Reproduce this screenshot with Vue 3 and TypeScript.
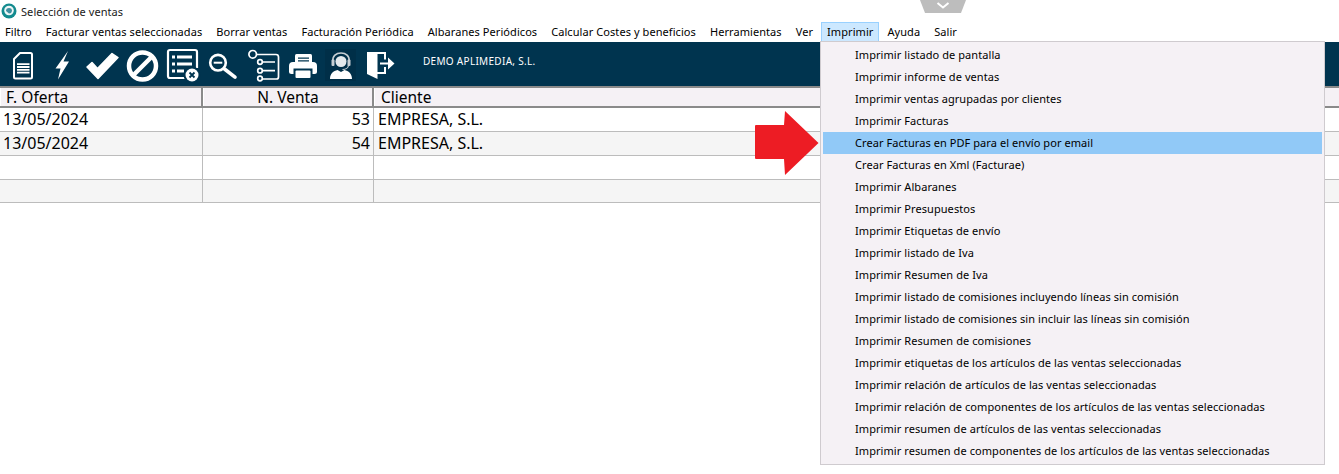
<script setup lang="ts">
const menus = ['Filtro','Facturar ventas seleccionadas','Borrar ventas','Facturación Periódica','Albaranes Periódicos','Calcular Costes y beneficios','Herramientas','Ver','Imprimir','Ayuda','Salir']
const items = [
  'Imprimir listado de pantalla','Imprimir informe de ventas','Imprimir ventas agrupadas por clientes','Imprimir Facturas',
  'Crear Facturas en PDF para el envío por email','Crear Facturas en Xml (Facturae)','Imprimir Albaranes','Imprimir Presupuestos',
  'Imprimir Etiquetas de envío','Imprimir listado de Iva','Imprimir Resumen de Iva','Imprimir listado de comisiones incluyendo líneas sin comisión',
  'Imprimir listado de comisiones sin incluir las líneas sin comisión','Imprimir Resumen de comisiones','Imprimir etiquetas de los artículos de las ventas seleccionadas',
  'Imprimir relación de artículos de las ventas seleccionadas','Imprimir relación de componentes de los artículos de las ventas seleccionadas',
  'Imprimir resumen de artículos de las ventas seleccionadas','Imprimir resumen de componentes de los artículos de las ventas seleccionadas'
]
const rows = [
  { date: '13/05/2024', num: '53', client: 'EMPRESA, S.L.' },
  { date: '13/05/2024', num: '54', client: 'EMPRESA, S.L.' },
  { date: '', num: '', client: '' },
  { date: '', num: '', client: '' }
]
</script>

<template>
  <div class="window">
    <div class="titlebar">
      <svg class="logo" width="16" height="16" viewBox="0 0 16 16">
        <circle cx="8" cy="8" r="7.5" fill="#138b8f" />
        <circle cx="8" cy="7.500" r="4.800" fill="#eef6f6" />
        <path d="M5 8a3 3 0 0 1 6 0 3 3 0 0 1-3 2.500z" fill="#3f8fa0" />
      </svg>
      <span>Selección de ventas</span>
    </div>
    <nav class="menubar">
      <span v-for="m in menus" :key="m" class="menu" :class="{ active: m === 'Imprimir' }">{{ m }}</span>
    </nav>
    <div class="toolbar">
      <!-- document -->
      <svg class="ico" viewBox="0 0 40 40" fill="none" stroke="#fff" stroke-width="2">
        <path d="M18 9h10.500q1.500 0 1.500 1.500v22.500q0 1.500-1.500 1.500h-15q-1.500 0-1.500-1.500V15z" stroke-linejoin="round" />
        <path d="M15 20.200h12.500M15 23h12.500M15 25.800h12.500M15 28.600h12.500" stroke-width="1.800" />
      </svg>
      <!-- bolt -->
      <svg class="ico" viewBox="0 0 40 40">
        <path d="M26 7 13.500 24.500H18.500L16 35.500 27 17.500H21.500z" fill="#fff" />
      </svg>
      <!-- check -->
      <svg class="ico" viewBox="0 0 40 40">
        <path d="M5 23l5-4.500 5.500 6L30 9.500l6 4-20 21z" fill="#fff" stroke="#fff" stroke-linejoin="round" stroke-width="1.500" />
      </svg>
      <!-- forbidden -->
      <svg class="ico" viewBox="0 0 40 40" fill="none" stroke="#fff" stroke-width="4.500">
        <circle cx="20.500" cy="22" r="13.500" />
        <path d="M11 31.500l19-19" />
      </svg>
      <!-- list with x -->
      <svg class="ico" viewBox="0 0 40 40" fill="none" stroke="#fff">
        <path d="M26 34H8q-2 0-2-2V8q0-2 2-2h25q2 0 2 2v16" stroke-width="2.200" />
        <path d="M10 13h3M15 13h15M10 20h3M15 20h15M10 27h3M15 27h7" stroke-width="3" />
        <circle cx="30" cy="31" r="8.500" fill="#00344f" stroke="none" />
        <circle cx="30" cy="31" r="6.500" fill="#fff" stroke="none" />
        <path d="M27.500 28.500l5 5M32.500 28.500l-5 5" stroke="#00344f" stroke-width="1.800" />
      </svg>
      <!-- magnifier -->
      <svg class="ico" viewBox="0 0 40 40" fill="none" stroke="#fff">
        <circle cx="16" cy="18.700" r="7.800" stroke-width="2.600" />
        <path d="M11.700 18.700h8.600" stroke-width="2" />
        <path d="M22.500 25 33 33.200" stroke-width="3.600" stroke-linecap="round" />
      </svg>
      <!-- tree -->
      <svg class="ico" viewBox="0 0 40 40" fill="none" stroke="#fff" stroke-width="1.700">
        <circle cx="10.700" cy="10.300" r="3.800" />
        <path d="M14.500 10.500H34q2.500 0 2.500 2.500v20q0 2-2 2H20.500" />
        <circle cx="18" cy="18" r="2.300" /><circle cx="18" cy="26.700" r="2.300" /><circle cx="18" cy="34.500" r="2.300" />
        <path d="M20.500 18H33M20.500 26.700H33" />
      </svg>
      <!-- printer -->
      <svg class="ico" viewBox="0 0 40 40">
        <path d="M13 20V11.500q0-1.500 1.500-1.500h14q1.500 0 1.500 1.500V20z" fill="#fff" />
        <path d="M16 14.200h11M16 16.800h11" stroke="#00344f" stroke-width="1.200" />
        <path d="M11 18h20q4 0 4 4v5.500q0 2.500-2.500 2.500h-23Q7 30 7 27.500V22q0-4 4-4z" fill="#fff" />
        <rect x="11.500" y="24.500" width="19" height="9.500" fill="#00344f" />
        <rect x="13.500" y="26.500" width="15" height="7.500" rx="1" fill="#fff" />
      </svg>
      <!-- person with headset -->
      <svg class="ico" viewBox="0 0 40 40">
        <rect x="3" y="5" width="31" height="32" fill="#002f48" />
        <circle cx="19" cy="17.500" r="5.500" fill="#e4e9ec" />
        <path d="M11 18c-1-6.500 3.500-9 8-9s9 2.500 8 9" fill="none" stroke="#c6ced3" stroke-width="1.700" />
        <path d="M26.500 21c0 3-3 4.500-6 4.500" fill="none" stroke="#c6ced3" stroke-width="1.200" />
        <rect x="9.500" y="15.500" width="3" height="6.500" rx="1" fill="#c6ced3" />
        <rect x="25.500" y="15.500" width="3" height="6.500" rx="1" fill="#c6ced3" />
        <path d="M8 35c0-5.500 3.500-8 7.500-9l3.500 2 3.500-2c4 1 7.500 3.500 7.500 9z" fill="#fff" />
      </svg>
      <!-- exit door -->
      <svg class="ico" viewBox="0 0 40 40">
        <path d="M5 8h10.500v27L5 30z" fill="#fff" />
        <path d="M15 9h8v6.500M23 23v6H15" fill="none" stroke="#fff" stroke-width="2" />
        <path d="M18 18.500h8v-5l6.500 6-6.500 6v-5h-8z" fill="#fff" />
      </svg>
      <span class="company">DEMO APLIMEDIA, S.L.</span>
    </div>
    <div class="grid">
      <div class="head">
        <div class="hc c1">F. Oferta</div>
        <div class="hc c2 center">N. Venta</div>
        <div class="hc c3">Cliente</div>
      </div>
      <div v-for="(r, i) in rows" :key="i" class="row" :class="{ alt: i % 2 === 1 }">
        <div class="cell c1">{{ r.date }}</div>
        <div class="cell c2 right">{{ r.num }}</div>
        <div class="cell c3">{{ r.client }}</div>
      </div>
    </div>

    <div class="dropdown">
      <div v-for="it in items" :key="it" class="item" :class="{ hot: it.startsWith('Crear Facturas en PDF') }">{{ it }}</div>
    </div>

    <svg class="arrow" width="64" height="64" viewBox="0 0 64 64">
      <path d="M30 0 63.500 32 30 64 29 48H1q-1 0-1-1V15q0-1 1-1h28z" fill="#ed1c24" />
    </svg>
    <svg class="notch" width="46" height="13" viewBox="0 0 46 13">
      <path d="M0 0h46l-5 13H5z" fill="#bdbdbd" />
      <path d="M17.500 3l5.500 4.500L28.500 3" fill="none" stroke="#fff" stroke-width="2" />
    </svg>
  </div>
</template>

<style scoped>
.window {
  position: relative;
  width: 1339px;
  height: 474px;
  overflow: hidden;
  background: #fff;
  font-family: "Noto Sans", "Liberation Sans", sans-serif;
  color: #000;
  font-size: 11px;
  letter-spacing: 0.07px;
}
.titlebar {
  height: 22px;
  display: flex;
  align-items: center;
  gap: 4px;
  padding-left: 1px;
  color: #1a1a1a;
}
.logo { flex: none; }
.menubar {
  height: 20px;
  display: flex;
  align-items: center;
}
.menu {
  padding: 0 5px;
  line-height: 18px;
  border: 1px solid transparent;
  margin-right: 2px;
  white-space: nowrap;
}
.menu:first-child { margin-left: -1px; }
.menu.active {
  background: #cce8ff;
  border-color: #99d1ff;
}
.toolbar {
  height: 44px;
  background: #00344f;
  display: flex;
  align-items: center;
  padding-left: 2px;
}
.ico {
  width: 40px;
  height: 40px;
  flex: none;
}
.company {
  color: #fff;
  font-size: 10px;
  letter-spacing: 0.3px;
  margin-left: 21px;
  margin-top: -6px;
  white-space: nowrap;
}
.grid {
  font-size: 16px;
  letter-spacing: 0;
  border-top: 2px solid #8a8a8a;
}
.head {
  display: flex;
  height: 20px;
  box-sizing: border-box;
  background: #f5f1f5;
  border-bottom: 2px solid #8a8a8a;
  font-size: 15.5px;
}
.hc {
  line-height: 19px;
  padding-left: 5px;
  border-right: 2px solid #8a8a8a;
  border-left: 1px solid #fff;
  box-sizing: border-box;
  white-space: nowrap;
}
.c1 { width: 203px; flex: none; }
.c2 { width: 171px; flex: none; }
.c3 { flex: 1; }
.hc.c3 { border-right: none; padding-left: 6px; }
.center { text-align: center; padding-left: 0; }
.row {
  display: flex;
  height: 24px;
  box-sizing: border-box;
  border-bottom: 1px solid #bcbcbc;
}
.row:last-child { height: 23px; }
.row.alt { background: #f5f5f5; }
.cell {
  box-sizing: border-box;
  border-right: 1px solid #bcbcbc;
  line-height: 22px;
  padding-left: 3px;
  white-space: nowrap;
}
.cell.c3 { border-right: none; padding-left: 4px; }
.right { text-align: right; padding-right: 3px; padding-left: 0; }
.dropdown {
  position: absolute;
  left: 820px;
  top: 41px;
  width: 505px;
  height: 424px;
  box-sizing: border-box;
  background: #f5f1f5;
  border: 1px solid #cfcbcf;
  padding: 2px;
}
.item {
  height: 22px;
  line-height: 22px;
  padding-left: 32px;
  white-space: nowrap;
}
.item.hot { background: #91c9f7; }
.arrow { position: absolute; left: 755px; top: 111px; }
.notch { position: absolute; left: 920px; top: 0; }
</style>
